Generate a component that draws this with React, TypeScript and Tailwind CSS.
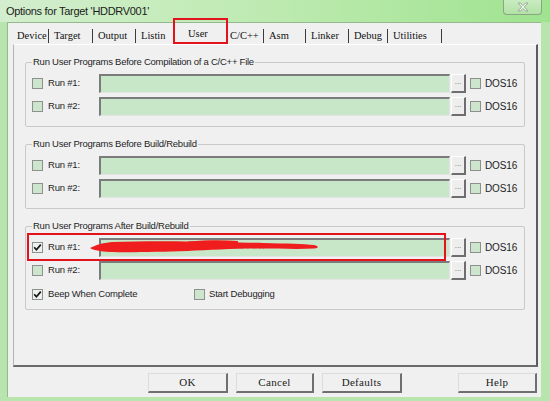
import React from 'react';

const sans = "font-['Liberation_Sans',Arial,sans-serif]";
const serif = "font-['Liberation_Serif','Times_New_Roman',serif]";

const CheckBox = ({ checked = false }: { checked?: boolean }) => (
    <span
        className={`flex h-[11px] w-[11px] shrink-0 items-center justify-center border border-[#8e8f8f] ${
            checked ? 'bg-[#eef2ee]' : 'bg-[#cde4cd]'
        }`}
    >
        {checked && (
            <svg width="9" height="9" viewBox="0 0 9 9">
                <path d="M1.2 4.2 L3.4 6.8 L7.8 1.6" stroke="#151515" strokeWidth="1.7" fill="none" />
            </svg>
        )}
    </span>
);

const RunRow = ({ n, checked = false, children }: { n: number; checked?: boolean; children?: React.ReactNode }) => (
    <div className="flex h-[19px] items-center">
        <CheckBox checked={checked} />
        <span className="ml-[5px] w-[51px] text-[9.5px] tracking-[-0.2px] text-[#1e1e1e]">Run #{n}:</span>
        <div className="relative h-[19px] flex-1 border-l-2 border-t-2 border-b border-r border-l-[#7b7b7b] border-t-[#7b7b7b] border-b-[#e4e4e4] border-r-[#e4e4e4] bg-[#c8e6c8]">
            {children}
        </div>
        <div className="ml-[1px] flex h-[19px] w-[15px] items-center justify-center border-l border-t border-b-2 border-r-2 border-l-white border-t-white border-b-[#6e6e6e] border-r-[#6e6e6e] bg-[#eeeeee] pb-[3px] text-[8px] leading-none text-[#6a6a6a]">
            ...
        </div>
        <span className="ml-[4px]">
            <CheckBox />
        </span>
        <span className="ml-[4px] w-[33px] text-[10px] tracking-[-0.1px] text-[#1e1e1e]">DOS16</span>
    </div>
);

const Group = ({ title, children }: { title: string; children: React.ReactNode }) => (
    <fieldset className="rounded-[2px] border border-[#c9c9c9] px-[6px] pt-[6px] pb-[10px]">
        <legend className="px-[1px] text-[9.5px] leading-[12px] tracking-[-0.25px] text-[#1e1e1e]">{title}</legend>
        <div className="flex flex-col gap-[4px]">{children}</div>
    </fieldset>
);

const tabs: { label: string; w: string; pl: string; sep: boolean; active?: boolean }[] = [
    { label: 'Device', w: 'w-[36px]', pl: 'pl-[4px]', sep: true },
    { label: 'Target', w: 'w-[44px]', pl: 'pl-[5px]', sep: true },
    { label: 'Output', w: 'w-[43px]', pl: 'pl-[5px]', sep: true },
    { label: 'Listin', w: 'w-[41px]', pl: 'pl-[5px]', sep: false },
    { label: 'User', w: 'w-[50px]', pl: 'pl-[11px]', sep: false, active: true },
    { label: 'C/C++', w: 'w-[37px]', pl: 'pl-[3px]', sep: true },
    { label: 'Asm', w: 'w-[42px]', pl: 'pl-[5px]', sep: true },
    { label: 'Linker', w: 'w-[43px]', pl: 'pl-[5px]', sep: true },
    { label: 'Debug', w: 'w-[39px]', pl: 'pl-[5px]', sep: true },
    { label: 'Utilities', w: 'w-[54px]', pl: 'pl-[5px]', sep: true },
];

const Button = ({ label, w }: { label: string; w: string }) => (
    <button
        className={`${w} h-[20px] border-l border-t border-b-2 border-r-2 border-l-[#dcdcdc] border-t-[#dcdcdc] border-b-[#6f6f6f] border-r-[#6f6f6f] bg-[#f0f0f0] ${serif} text-[11px] font-medium tracking-[0.3px] text-[#222]`}
    >
        {label}
    </button>
);

export default function App() {
    return (
        <div className={`relative flex h-[401px] w-[550px] flex-col overflow-hidden bg-[#b8e4ad] ${sans}`}>
            {/* title bar */}
            <div className="flex h-[22px] shrink-0 items-start justify-between bg-gradient-to-r from-[#d3eece] via-[#bdeab0] to-[#9fe38f] pl-[6px] pr-[8px]">
                <span className="mt-[4px] text-[11px] leading-[14px] tracking-[-0.3px] text-[#1b1b1b]">
                    Options for Target 'HDDRV001'
                </span>
                <div className="flex h-[15px] w-[39px] items-center justify-center rounded-b-[4px] border border-t-0 border-[#8aa687] bg-gradient-to-b from-[#c9ecc0] to-[#b2e2a6]">
                    <svg width="12" height="10" viewBox="0 0 12 10">
                        <path
                            d="M1 1 H3.5 L6 3.6 L8.5 1 H11 L7.3 5 L11 9 H8.5 L6 6.4 L3.5 9 H1 L4.7 5 Z"
                            fill="#eef6ec"
                            stroke="#8c9a8a"
                            strokeWidth="0.8"
                        />
                    </svg>
                </div>
            </div>

            {/* client area */}
            <div className="ml-[7px] mr-[9px] mb-[4px] flex flex-1 flex-col border-l border-t border-[#93b98d] bg-[#f0f0f0] pt-[5px]">
                {/* tabs */}
                <div className={`ml-[5px] flex h-[16px] items-center ${serif} text-[10.5px] font-medium text-[#111]`}>
                    {tabs.map((t) => (
                        <div
                            key={t.label}
                            className={`${t.w} ${t.pl} flex h-[14px] items-center overflow-hidden whitespace-nowrap leading-none ${
                                t.sep ? 'border-r border-[#3c3c3c]' : ''
                            } ${t.active ? '-mt-[3px]' : ''}`}
                        >
                            {t.label}
                        </div>
                    ))}
                </div>

                {/* tab page */}
                <div className="ml-[5px] mr-[3px] flex h-[323px] flex-col gap-[11px] border-l border-t border-b-2 border-r-2 border-l-[#b4b4b4] border-t-white border-b-[#6a6a6a] border-r-[#5c5c5c] px-[11px] pt-[11px]">
                    <Group title="Run User Programs Before Compilation of a C/C++ File">
                        <RunRow n={1} />
                        <RunRow n={2} />
                    </Group>
                    <Group title="Run User Programs Before Build/Rebuild">
                        <RunRow n={1} />
                        <RunRow n={2} />
                    </Group>
                    <fieldset className="rounded-[2px] border border-[#c9c9c9] px-[6px] pt-[6px] pb-[5px]">
                        <legend className="px-[1px] text-[9.5px] leading-[12px] tracking-[-0.25px] text-[#1e1e1e]">
                            Run User Programs After Build/Rebuild
                        </legend>
                        <div className="flex flex-col gap-[4px]">
                            <RunRow n={1} checked>
                                <span className="absolute left-[100px] top-[1px] text-[8px] tracking-[1px] text-[#6f7f6f]">
                                    \ .. \ .. \ \ \ \ ..
                                </span>
                            </RunRow>
                            <RunRow n={2} />
                            <div className="mt-[1px] flex h-[19px] items-center">
                                <CheckBox checked />
                                <span className="ml-[5px] w-[146px] text-[9.5px] tracking-[-0.2px] text-[#1e1e1e]">
                                    Beep When Complete
                                </span>
                                <CheckBox />
                                <span className="ml-[4px] text-[9.5px] tracking-[-0.2px] text-[#1e1e1e]">
                                    Start Debugging
                                </span>
                            </div>
                        </div>
                    </fieldset>
                </div>

                {/* buttons */}
                <div className="mt-[6px] flex h-[20px] gap-[8px] pl-[140px] pr-[4px]">
                    <Button label="OK" w="w-[80px]" />
                    <Button label="Cancel" w="w-[78px]" />
                    <Button label="Defaults" w="w-[80px]" />
                    <div className="flex-1" />
                    <Button label="Help" w="w-[79px]" />
                </div>
            </div>

            {/* red annotation: tab */}
            <div className="absolute left-[173px] top-[18px] h-[26px] w-[55px] border-2 border-[#e2131b]" />
            {/* red annotation: run row */}
            <div className="absolute left-[27px] top-[233px] h-[28px] w-[419px] border-2 border-[#e2131b]" />
            {/* red scribble */}
            <svg className="absolute left-[88px] top-[238px]" width="234" height="18" viewBox="0 0 234 18">
                <path
                    d="M2 10 C8 7 14 5 24 4 C50 3 80 3 105 3.5 C130 4 150 4.5 175 5 C200 5.5 215 6 226 7 C231 8 231 10 226 10.5 C210 11.5 190 10.5 170 10.5 C145 10.5 120 12 100 13 C70 14 40 14.5 22 14 C12 13.5 5 12 2 10 Z"
                    fill="#ef1d1d"
                />
                <path d="M100 3.5 C120 2 135 2 150 3 L150 5 C135 5 118 5 100 5 Z" fill="#ef1d1d" />
            </svg>
        </div>
    );
}
